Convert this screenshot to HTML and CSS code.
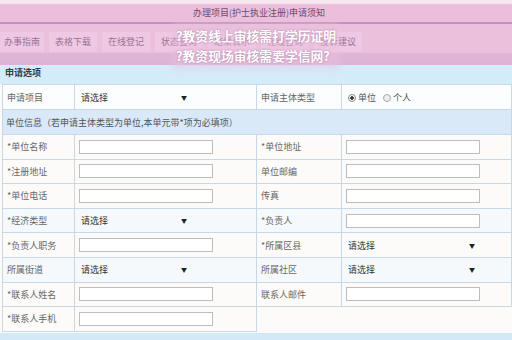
FILE: index.html
```html
<!DOCTYPE html>
<html lang="zh-CN">
<head>
  <meta charset="UTF-8" />
  <title>办理项目(护士执业注册)申请须知</title>
  <link rel="stylesheet" href="styles.css">
</head>
<body>

  <div class="top">
    <h1>办理项目(护士执业注册)申请须知</h1>
  </div>

  <div class="tabs">
    <span class="tab">办事指南</span>
    <span class="tab">表格下载</span>
    <span class="tab">在线登记</span>
    <span class="tab">状态查询</span>
    <span class="tab">结果公示</span>
    <span class="tab">在线咨询</span>
    <span class="tab">投诉建议</span>
  </div>

  <div class="caption">
    <p>?教资线上审核需打学历证明</p>
    <p>?教资现场审核需要学信网?</p>
  </div>

  <div class="section-head">申请选项</div>

  <table class="form">
    <tr class="first">
      <td class="label">申请项目</td>
      <td><div class="select"><span>请选择</span><span class="arrow">▼</span></div></td>
      <td class="label">申请主体类型</td>
      <td>
        <span class="radio on"></span><span class="opt">单位</span>
        <span class="radio"></span><span class="opt">个人</span>
      </td>
    </tr>
    <tr class="group">
      <td colspan="4">单位信息（若申请主体类型为单位,本单元带*项为必填项）</td>
    </tr>
    <tr>
      <td class="label">*单位名称</td>
      <td><input type="text"></td>
      <td class="label">*单位地址</td>
      <td><input type="text"></td>
    </tr>
    <tr>
      <td class="label">*注册地址</td>
      <td><input type="text"></td>
      <td class="label">单位邮编</td>
      <td><input type="text"></td>
    </tr>
    <tr>
      <td class="label">*单位电话</td>
      <td><input type="text"></td>
      <td class="label">传真</td>
      <td><input type="text"></td>
    </tr>
    <tr class="tint">
      <td class="label">*经济类型</td>
      <td><div class="select"><span>请选择</span><span class="arrow">▼</span></div></td>
      <td class="label">*负责人</td>
      <td><input type="text"></td>
    </tr>
    <tr>
      <td class="label">*负责人职务</td>
      <td><input type="text"></td>
      <td class="label">*所属区县</td>
      <td><div class="select wide"><span>请选择</span><span class="arrow">▼</span></div></td>
    </tr>
    <tr class="tint">
      <td class="label">所属街道</td>
      <td><div class="select"><span>请选择</span><span class="arrow">▼</span></div></td>
      <td class="label">所属社区</td>
      <td><div class="select wide"><span>请选择</span><span class="arrow">▼</span></div></td>
    </tr>
    <tr>
      <td class="label">*联系人姓名</td>
      <td><input type="text"></td>
      <td class="label">联系人邮件</td>
      <td><input type="text"></td>
    </tr>
    <tr class="last">
      <td class="label">*联系人手机</td>
      <td><input type="text"></td>
      <td class="empty" colspan="2"></td>
    </tr>
  </table>

  <div class="footer-band"></div>

</body>
</html>
```

FILE: styles.css
```css
body {
  margin: 0;
  width: 512px;
  height: 340px;
  overflow: hidden;
  background: #fdfbf9;
  font-family: "Noto Sans CJK SC", "Noto Sans", sans-serif;
  color: #555;
  position: relative;
}
.top {
  height: 22px;
  background: linear-gradient(to bottom, #f7e9f2 0, #f7e9f2 3px, #ecbedc 5px, #ecbedc 100%);
  border-bottom: 2px solid #bd92bb;
  text-align: center;
}
h1 {
  margin: 0;
  padding-top: 6px;
  padding-left: 6px;
  font-size: 9px;
  line-height: 14px;
  font-weight: normal;
  color: #6d4d6b;
}
.tabs {
  height: 41px;
  box-sizing: border-box;
  padding: 8px 0 0 0;
  display: flex;
  gap: 5px;
  background: linear-gradient(to bottom, #eac0dd 0, #eac0dd 28px, #dfb5d7 30px, #dcb3d6 100%);
}
.tab {
  width: 48px;
  height: 20px;
  font-size: 9px;
  line-height: 20px;
  text-align: center;
  color: #9b7195;
  background: #efc9e3;
}
.tab:first-child {
  width: 44px;
}
.caption {
  position: absolute;
  left: 176px;
  top: 26px;
  color: #fff;
  font-weight: bold;
  font-size: 12.8px;
  line-height: 20px;
  background: rgba(236, 192, 222, 0.45);
  box-shadow: 0 0 6px 4px rgba(236, 192, 222, 0.45);
  text-shadow: 0 0 2px #a4709c;
}
.caption p {
  margin: 0;
}
.section-head {
  height: 19px;
  padding-left: 5px;
  font-size: 9px;
  line-height: 15px;
  font-weight: bold;
  color: #3a3a3a;
  background: #d4ecfa;
}
.form {
  margin-left: 2px;
  width: 510px;
  border-collapse: collapse;
  font-size: 9px;
  table-layout: fixed;
}
.form td {
  border: 1px solid #c7d9e6;
  padding: 0 0 0 4px;
  height: 23.6px;
  white-space: nowrap;
}
.form td:nth-child(1) { width: 67px; }
.form td:nth-child(2) { width: 177px; }
.form td:nth-child(3) { width: 80px; }
.form .label {
  color: #666;
}
.form .first td {
  height: 24px;
  background: #fbfdfe;
}
.form .group td {
  height: 24px;
  padding-left: 3px;
  color: #555;
  background: #d9e9f8;
}
.form .tint td {
  background: #f6f9fb;
}
.form .last .empty {
  border: none;
  background: transparent;
}
.form input {
  box-sizing: border-box;
  display: block;
  width: 134px;
  height: 14px;
  margin: 0;
  padding: 0;
  border: 1px solid #bdbdbd;
  background: #fff;
}
.select {
  width: 106px;
  display: flex;
  justify-content: space-between;
  color: #333;
  padding-left: 2px;
}
.select.wide {
  width: 127px;
}
.arrow {
  font-size: 6px;
  color: #222;
  line-height: 13px;
}
.radio {
  display: inline-block;
  width: 6px;
  height: 6px;
  border: 1px solid #aaa;
  border-radius: 50%;
  background: #eee;
  vertical-align: -1px;
  margin: 0 2px 0 2px;
}
.radio.on {
  background: radial-gradient(circle, #333 0, #333 1.5px, #fff 2px);
  border-color: #888;
}
.opt {
  margin-right: 3px;
  color: #555;
}
.footer-band {
  margin-top: 1px;
  height: 10px;
  background: #d4e9f8;
}
```
